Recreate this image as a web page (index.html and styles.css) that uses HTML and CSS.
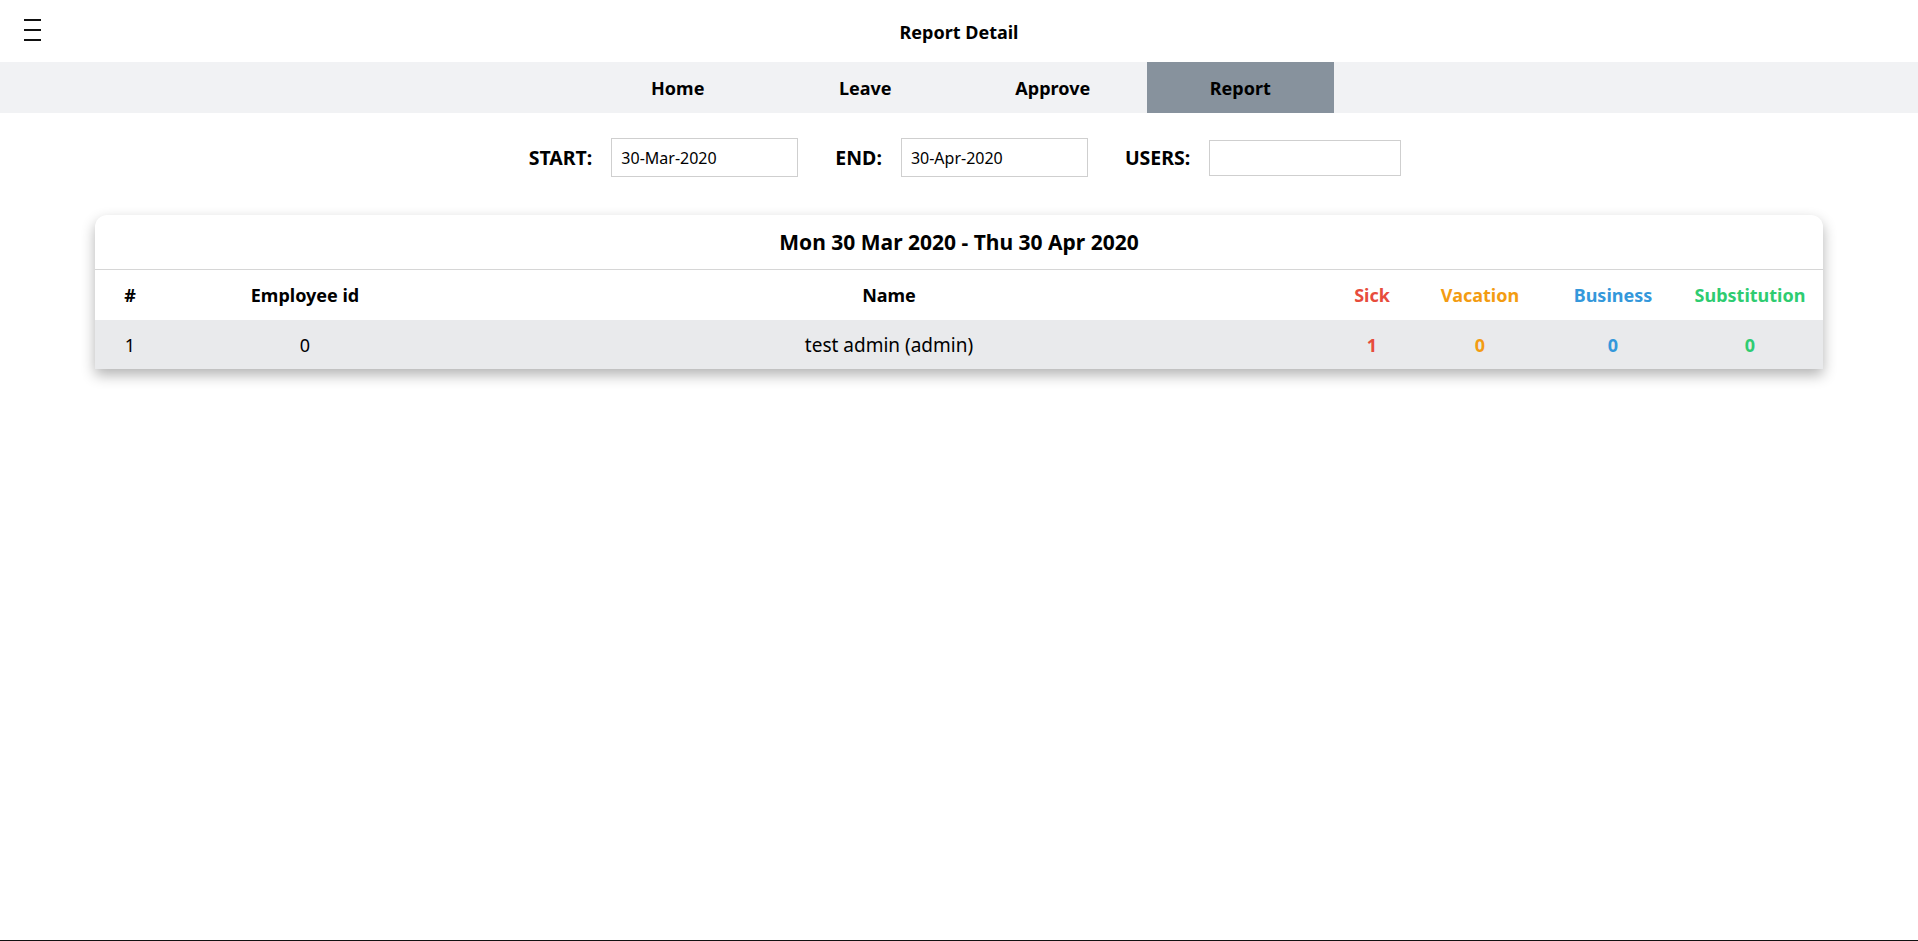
FILE: index.html
```html
<!DOCTYPE html>
<html lang="en">
<head>
<meta charset="utf-8">
<title>Report Detail</title>
<link rel="stylesheet" href="styles.css">
</head>
<body>
<div class="page">
  <header class="topbar">
    <div class="topbar-left">
      <button class="burger" aria-label="menu"><span></span><span></span><span></span></button>
    </div>
    <h1 class="title">Report Detail</h1>
    <div class="topbar-right"></div>
  </header>
  <nav class="nav">
    <a class="nav-item">Home</a>
    <a class="nav-item">Leave</a>
    <a class="nav-item">Approve</a>
    <a class="nav-item active">Report</a>
  </nav>
  <section class="filters">
    <label class="flabel">START:</label>
    <input class="finput" type="text" value="30-Mar-2020">
    <label class="flabel">END:</label>
    <input class="finput" type="text" value="30-Apr-2020">
    <label class="flabel">USERS:</label>
    <input class="finput users" type="text" value="">
  </section>
  <section class="card">
    <div class="card-head">Mon 30 Mar 2020 - Thu 30 Apr 2020</div>
    <table class="report">
      <colgroup>
        <col class="c1"><col class="c2"><col class="c3"><col class="c4"><col class="c5"><col class="c6"><col class="c7">
      </colgroup>
      <thead>
        <tr>
          <th>#</th>
          <th>Employee id</th>
          <th>Name</th>
          <th class="sick">Sick</th>
          <th class="vac">Vacation</th>
          <th class="bus">Business</th>
          <th class="sub">Substitution</th>
        </tr>
      </thead>
      <tbody>
        <tr>
          <td>1</td>
          <td>0</td>
          <td class="name">test admin (admin)</td>
          <td class="sick b">1</td>
          <td class="vac b">0</td>
          <td class="bus b">0</td>
          <td class="sub b">0</td>
        </tr>
      </tbody>
    </table>
  </section>
</div>
</body>
</html>
```
FILE: styles.css
```css
html, body {
  margin: 0;
  padding: 0;
  height: 100%;
}
body {
  font-family: "Noto Sans", "Open Sans", sans-serif;
  color: #000;
  background: #fff;
}
.page {
  min-height: 940px;
  border-bottom: 1px solid #111;
  box-sizing: content-box;
}
.topbar {
  height: 62px;
  display: grid;
  grid-template-columns: 1fr auto 1fr;
  align-items: center;
}
.topbar-left {
  padding-left: 24px;
}
.burger {
  display: flex;
  flex-direction: column;
  justify-content: space-between;
  width: 17px;
  height: 22px;
  padding: 0;
  margin: 0;
  border: 0;
  background: transparent;
  margin-top: -2px;
}
.burger span {
  display: block;
  height: 2px;
  background: #111;
}
.title {
  margin: 0;
  font-size: 18px;
  font-weight: 700;
  line-height: 1;
  padding-top: 2px;
}
.nav {
  height: 51px;
  background: #f1f2f4;
  display: flex;
  justify-content: center;
}
.nav-item {
  width: 187.5px;
  display: flex;
  align-items: center;
  justify-content: center;
  font-size: 18px;
  font-weight: 700;
  color: #000;
}
.nav-item.active {
  background: #87929d;
}
.filters {
  display: flex;
  justify-content: center;
  align-items: center;
  margin-top: 25px;
  padding-left: 12px;
  height: 39px;
}
.flabel {
  font-size: 19.5px;
  font-weight: 700;
  margin-right: 19px;
}
.finput {
  box-sizing: border-box;
  width: 187px;
  height: 39px;
  border: 1px solid #cfcfcf;
  padding: 0 9px;
  font-family: "Noto Sans", sans-serif;
  font-size: 16px;
  color: #000;
  margin-right: 37px;
  outline: none;
  background: #fff;
}
.finput.users {
  width: 192px;
  height: 36px;
  margin-right: 0;
}
.card {
  margin: 38px 95px 0;
  background: #fff;
  border-radius: 12px 12px 0 0;
  box-shadow: 0 6px 14px rgba(0, 0, 0, 0.3);
  overflow: hidden;
}
.card-head {
  height: 54px;
  display: flex;
  align-items: center;
  justify-content: center;
  font-size: 21px;
  font-weight: 700;
  border-bottom: 1px solid #d6d6d6;
}
.report {
  width: 100%;
  border-collapse: collapse;
  table-layout: fixed;
}
.c1 { width: 70px; }
.c2 { width: 280px; }
.c3 { width: 888px; }
.c4 { width: 78px; }
.c5 { width: 138px; }
.c6 { width: 128px; }
.c7 { width: 146px; }
.report th {
  height: 50px;
  padding: 0;
  font-size: 18px;
  font-weight: 700;
  text-align: center;
}
.report td {
  height: 49px;
  padding: 0;
  font-size: 18px;
  text-align: center;
  background: #e9eaec;
}
.report td.name { font-size: 19px; }
.report td.b { font-weight: 700; }
.sick { color: #e74c3c; }
.vac { color: #f39c12; }
.bus { color: #3498db; }
.sub { color: #2ecc71; }
```
